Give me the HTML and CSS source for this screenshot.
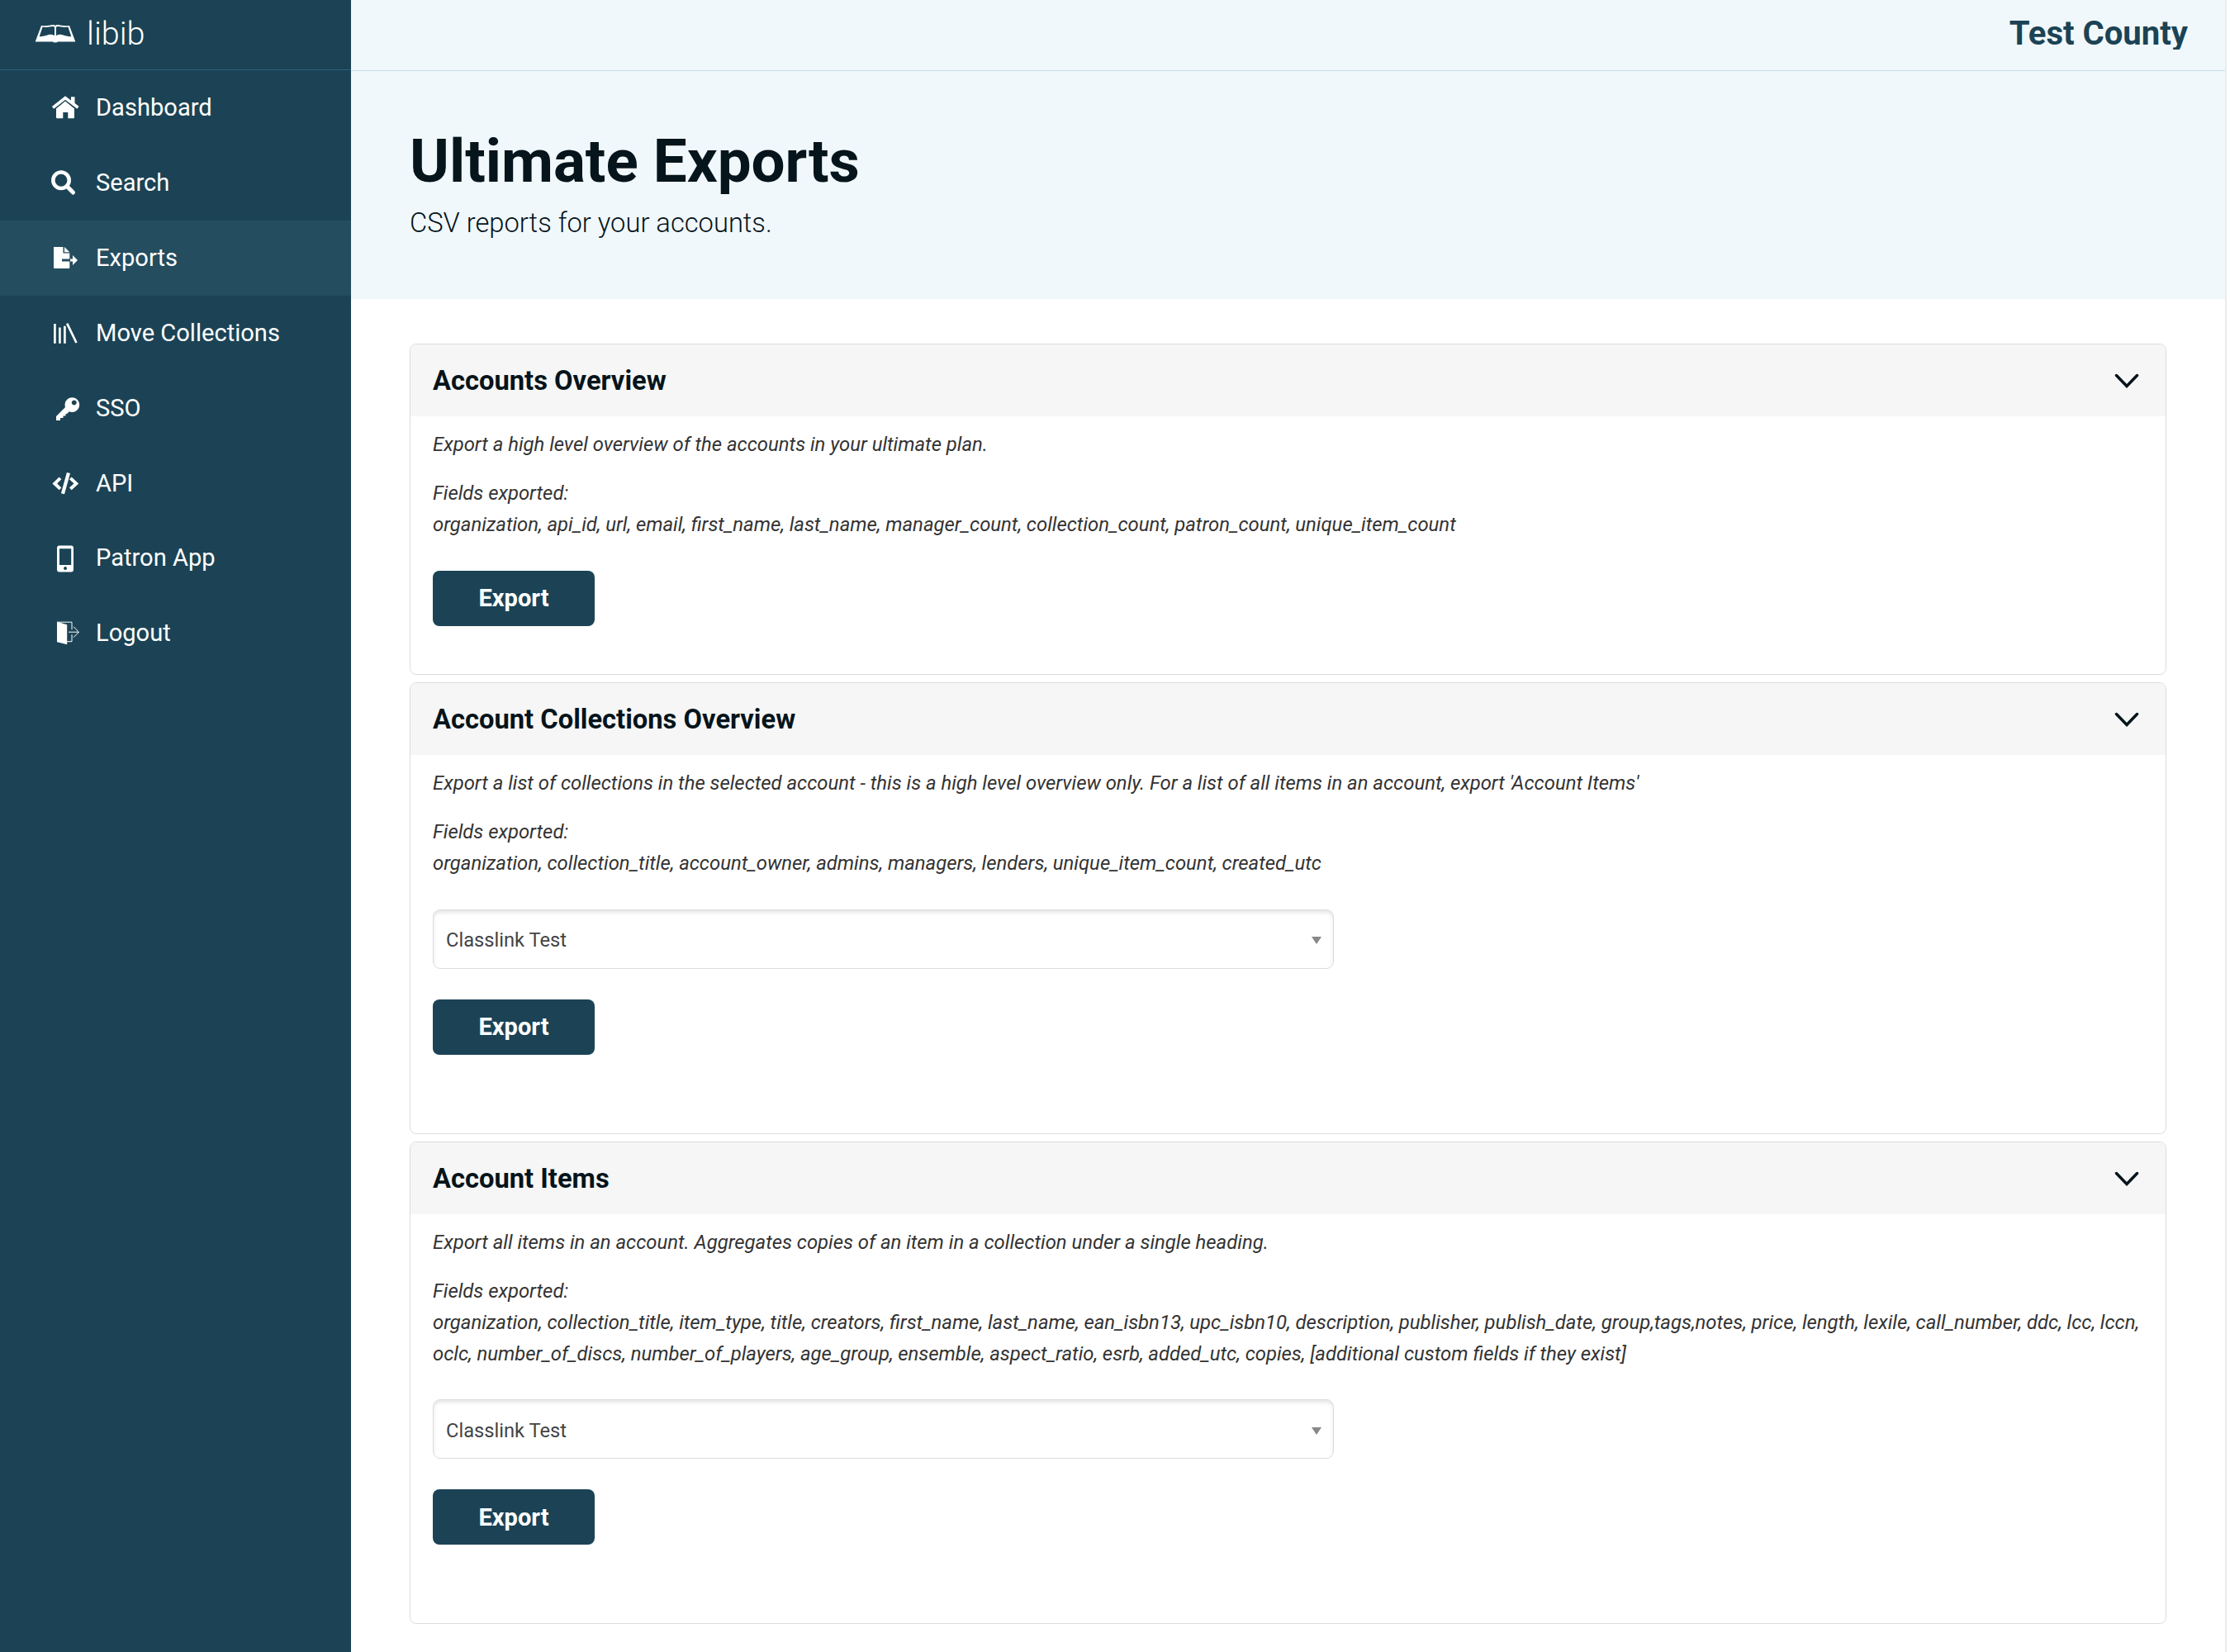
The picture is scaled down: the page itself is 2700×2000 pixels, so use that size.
FILE: index.html
```html
<!DOCTYPE html>
<html lang="en">
<head>
<meta charset="utf-8">
<title>Ultimate Exports</title>
<link rel="stylesheet" href="styles.css">
</head>
<body>
<div class="app">
  <aside class="sidebar">
    <div class="brand">
      <svg class="brand-icon" width="50" height="22" viewBox="0 0 50 22"><path fill="#fff" fill-rule="evenodd" d="M8 1 C14 1.800 19 .6 22.500 .1 Q24 .1 25 1 Q26 .1 27.500 .1 C31 .6 36 1.800 42 1 L49.300 20.500 H28 Q27.500 21.500 25 21.500 Q22.500 21.500 22 20.500 H.7 Z M9.500 2.800 L5.700 14.300 C12 14 16 11.700 20 11.700 Q23 12 24 13.200 V3 Q23 1.500 20 2.200 C16 2.900 13 3 9.500 2.800 Z M40.500 2.800 C37 3 34 2.900 30 2.200 Q27 1.500 26 3 V13.200 Q27 12 30 11.700 C34 11.700 38 14 44.300 14.300 Z"/></svg>
      <span class="brand-name">libib</span>
    </div>
    <nav class="nav">
      <a class="nav-item"><svg class="nav-icon" viewBox="0 0 34 34"><path d="M17 9.500 L28 18.500 V29 Q28 30.300 27 30.300 H20.300 V23 H14.300 V30.300 H7 Q6 30.300 6 29 V18.500 Z"/><path d="M2 17.300 L17 5.500 L32.500 17.300" fill="none" stroke="#fff" stroke-width="3.600"/><path d="M24 4.200 H28.500 V14 L24 10.500 Z"/></svg>Dashboard</a>
      <a class="nav-item"><svg class="nav-icon" viewBox="0 0 34 34"><g fill="none" stroke="#fff"><circle cx="12" cy="14.200" r="9.700" stroke-width="4.500"/><path d="M19 21.500 L26.500 29" stroke-width="5" stroke-linecap="round"/></g></svg>Search</a>
      <a class="nav-item active"><svg class="nav-icon" viewBox="0 0 34 34"><path d="M3 4 H14.500 V11.600 H22.300 V18.400 H13 V21.600 H22.300 V29 Q22.300 30 21.300 30 H4 Q3 30 3 29 Z M16 4 L22.300 10.200 H16 Z M23 18.400 H26 V14 L32 20 L26 26 V21.600 H23 Z"/></svg>Exports</a>
      <a class="nav-item"><svg class="nav-icon" viewBox="0 0 34 34"><path d="M4.400 6 V29.700 M10.400 10.500 V29.700 M16.400 8.700 V29.700 M19.200 5.700 L30.500 29" fill="none" stroke="#fff" stroke-width="2.700"/></svg>Move Collections</a>
      <a class="nav-item"><svg class="nav-icon" viewBox="0 0 34 34"><path fill-rule="evenodd" d="M25.200 4.200 A8.900 8.900 0 1 1 21.800 21.300 L19 24 H17.500 V26.500 H14.500 V29 H11 V32 H6 V27 L17 16 A8.900 8.900 0 0 1 25.200 4.200 Z M27.700 7.400 A3 3 0 1 0 27.800 7.400 Z"/></svg>SSO</a>
      <a class="nav-item"><svg class="nav-icon" viewBox="0 0 34 34"><path d="M11 10.900 L4.300 17.400 L11 23.900 M23.300 10.900 L30.300 17.400 L23.300 23.900" fill="none" stroke="#fff" stroke-width="4"/><path d="M18.900 4 L23 5 L16 30.300 L11.900 29.300 Z"/></svg>API</a>
      <a class="nav-item"><svg class="nav-icon" viewBox="0 0 34 34"><path fill-rule="evenodd" d="M10 1.400 H24 Q27 1.400 27 4.400 V30.400 Q27 33.400 24 33.400 H10 Q7 33.400 7 30.400 V4.400 Q7 1.400 10 1.400 Z M10 5.200 V25 H24.200 V5.200 Z M17 27.100 A2 2 0 1 0 17.100 27.100 Z"/></svg>Patron App</a>
      <a class="nav-item"><svg class="nav-icon" viewBox="0 0 34 34"><path d="M7 3.700 L19.200 7.200 V31.200 L7 28.200 Z"/><path d="M7 4.200 H25 V13.200 M25 19.200 V27.700 H19 M21 16.200 H33 M27 9.700 L33.500 16.200 L27 22.700" fill="none" stroke="#fff"/></svg>Logout</a>
    </nav>
  </aside>
  <main class="content">
    <header class="topbar"><div class="org">Test County</div></header>
    <section class="hero">
      <h1>Ultimate Exports</h1>
      <p>CSV reports for your accounts.</p>
    </section>
    <div class="cards">
      <section class="card">
        <div class="card-head"><h2>Accounts Overview</h2><svg class="chevron" viewBox="0 0 30 18"><path d="M2.500 2.500 L15 15.500 L27.500 2.500"/></svg></div>
        <div class="card-body">
          <p>Export a high level overview of the accounts in your ultimate plan.</p>
          <p class="fields">Fields exported:<br>organization, api_id, url, email, first_name, last_name, manager_count, collection_count, patron_count, unique_item_count</p>
          <button class="export">Export</button>
        </div>
      </section>
      <section class="card collections">
        <div class="card-head"><h2>Account Collections Overview</h2><svg class="chevron" viewBox="0 0 30 18"><path d="M2.500 2.500 L15 15.500 L27.500 2.500"/></svg></div>
        <div class="card-body">
          <p>Export a list of collections in the selected account - this is a high level overview only. For a list of all items in an account, export 'Account Items'</p>
          <p class="fields">Fields exported:<br>organization, collection_title, account_owner, admins, managers, lenders, unique_item_count, created_utc</p>
          <div class="select">Classlink Test<span class="arrow"></span></div>
          <button class="export">Export</button>
        </div>
      </section>
      <section class="card items">
        <div class="card-head"><h2>Account Items</h2><svg class="chevron" viewBox="0 0 30 18"><path d="M2.500 2.500 L15 15.500 L27.500 2.500"/></svg></div>
        <div class="card-body">
          <p>Export all items in an account. Aggregates copies of an item in a collection under a single heading.</p>
          <p class="fields">Fields exported:<br>organization, collection_title, item_type, title, creators, first_name, last_name, ean_isbn13, upc_isbn10, description, publisher, publish_date, group,tags,notes, price, length, lexile, call_number, ddc, lcc, lccn,<br>oclc, number_of_discs, number_of_players, age_group, ensemble, aspect_ratio, esrb, added_utc, copies, [additional custom fields if they exist]</p>
          <div class="select">Classlink Test<span class="arrow"></span></div>
          <button class="export">Export</button>
        </div>
      </section>
    </div>
  </main>
</div>
</body>
</html>
```
FILE: styles.css
```css
* { box-sizing: border-box; }
body { margin: 0; background: #fff; font-family: Roboto, sans-serif; }
h1, h2, p { margin: 0; }
.app { display: flex; width: 2700px; height: 2000px; overflow: hidden; }
.sidebar { width: 425px; flex: none; background: #1b4355; color: #fff; }
.brand { display: flex; align-items: center; height: 85px; padding: 0 0 3px 42px; border-bottom: 1px solid #2c5f78; }
.brand-name { margin-left: 13px; font-size: 39.6px; font-weight: 300; line-height: 40px; }
.nav-item { display: flex; align-items: center; height: 90.86px; padding: 0 0 .4px 62px; font-size: 29.1px; line-height: 34px; }
.nav-icon { width: 34px; height: 34px; margin: .4px 20px 0 0; overflow: visible; fill: #fff; }
.active { background: #244d5f; }
.content { width: 2271px; flex: none; border-right: 2px solid #ebebeb; }
.topbar { height: 86px; padding: 17px 45px 0 0; border-bottom: 1px solid #c6dfe9; background: #f0f8fb; }
.org { height: 43px; overflow: hidden; color: #1b4355; font-size: 40.1px; font-weight: 700; line-height: 47px; text-align: right; }
.hero { height: 276px; padding: 66px 71px 0; background: #f0f8fb; color: #06141b; }
.hero h1 { font-size: 72.7px; line-height: 87px; }
.hero p { margin-top: 11px; font-size: 32.7px; font-weight: 300; line-height: 40px; }
.cards { display: flex; flex-direction: column; gap: 9px; padding: 54px 71px 0; }
.card { height: 401px; border: 1px solid #dcdcdc; border-radius: 8px; overflow: hidden; }
.collections { height: 547px; }
.items { height: 584px; }
.card-head { display: flex; align-items: center; justify-content: space-between; height: 87px; padding: 0 32px 0 27px; background: #f6f6f6; color: #06141b; }
.card-head h2 { padding-top: 2px; font-size: 32.7px; line-height: 39px; }
.chevron { width: 30px; height: 18px; fill: none; stroke: #06141b; stroke-width: 3.5; stroke-linecap: round; }
.card-body { padding: 15px 27px; color: #333; font-size: 23.86px; line-height: 38px; }
.card-body p { font-style: italic; white-space: nowrap; }
.card-body .fields { margin-top: 21px; }
.select { display: flex; align-items: center; justify-content: space-between; width: 1091px; height: 72px; margin-top: 37px; padding: 2px 14px 0 15px; border: 1px solid #dcdcdc; border-radius: 9px; box-shadow: inset 0 3px 4px #e6e6e6; color: #444; font-size: 23.7px; }
.items .select { margin-top: 36px; padding-top: 4px; }
.arrow { border: 6px solid transparent; border-top: 9px solid #888; border-bottom: 0; }
.export { display: block; width: 196px; height: 67px; margin-top: 37px; padding: 0 0 2px; border: 0; border-radius: 8px; background: #1b4355; color: #fff; font: 700 29.1px Roboto, sans-serif; }
.items .export { padding-bottom: 0; }
```
